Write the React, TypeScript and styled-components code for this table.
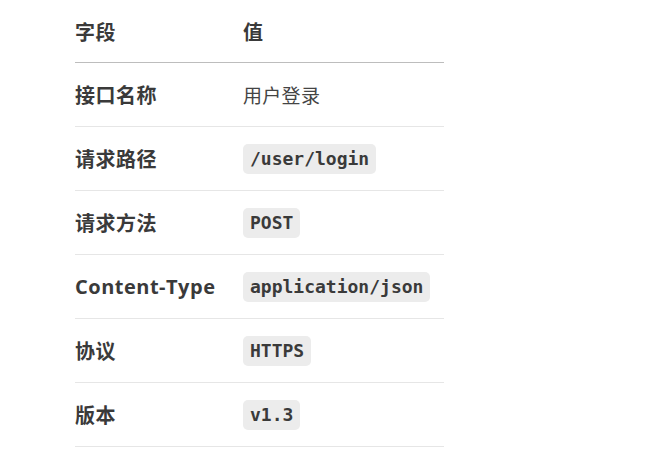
import styled, { createGlobalStyle } from "styled-components";

const GlobalStyle = createGlobalStyle`
  html, body {
    margin: 0;
    background: #ffffff;
  }
  body {
    font-family: "Open Sans", "Noto Sans CJK SC", sans-serif;
    color: #333333;
  }
`

const Page = styled.div`
  padding: 0 0 0 75px;
`

const Table = styled.table`
  width: 369px;
  table-layout: fixed;
  border-collapse: collapse;
  font-size: 20px;
`

const KeyCol = styled.col`
  width: 168px;
`

const HeadCell = styled.th`
  height: 62px;
  padding: 0;
  text-align: left;
  font-weight: 700;
  letter-spacing: 0.5px;
  color: #3a3a3a;
  border-bottom: 1px solid #bdbdbd;
  vertical-align: middle;
`

const Row = styled.tr`
  border-bottom: 1px solid #e6e6e6;
`

const KeyCell = styled.td`
  height: 63px;
  padding: 0;
  font-weight: 700;
  letter-spacing: 0.5px;
  color: #3a3a3a;
  white-space: nowrap;
  vertical-align: middle;
`

const ValueCell = styled.td`
  padding: 0;
  color: #444444;
  font-size: 19px;
  letter-spacing: 0.3px;
  vertical-align: middle;
`

const Code = styled.code`
  display: inline-block;
  padding: 0 7px;
  line-height: 30px;
  border-radius: 5px;
  background: #ececec;
  font-family: "DejaVu Sans Mono", "Liberation Mono", monospace;
  font-weight: 700;
  font-size: 18px;
  letter-spacing: 0;
  color: #3a3a3a;
`

type Entry = { key: string; value: string; code?: boolean }

const entries: Entry[] = [
    { key: "接口名称", value: "用户登录" },
    { key: "请求路径", value: "/user/login", code: true },
    { key: "请求方法", value: "POST", code: true },
    { key: "Content-Type", value: "application/json", code: true },
    { key: "协议", value: "HTTPS", code: true },
    { key: "版本", value: "v1.3", code: true },
]

export default function App() {
    return (
        <Page>
            <GlobalStyle/>
            <Table>
                <colgroup>
                    <KeyCol/>
                    <col/>
                </colgroup>
                <thead>
                <tr>
                    <HeadCell>字段</HeadCell>
                    <HeadCell>值</HeadCell>
                </tr>
                </thead>
                <tbody>
                {entries.map((e) => (
                    <Row key={e.key}>
                        <KeyCell>{e.key}</KeyCell>
                        <ValueCell>{e.code ? <Code>{e.value}</Code> : e.value}</ValueCell>
                    </Row>
                ))}
                </tbody>
            </Table>
        </Page>
    )
}
